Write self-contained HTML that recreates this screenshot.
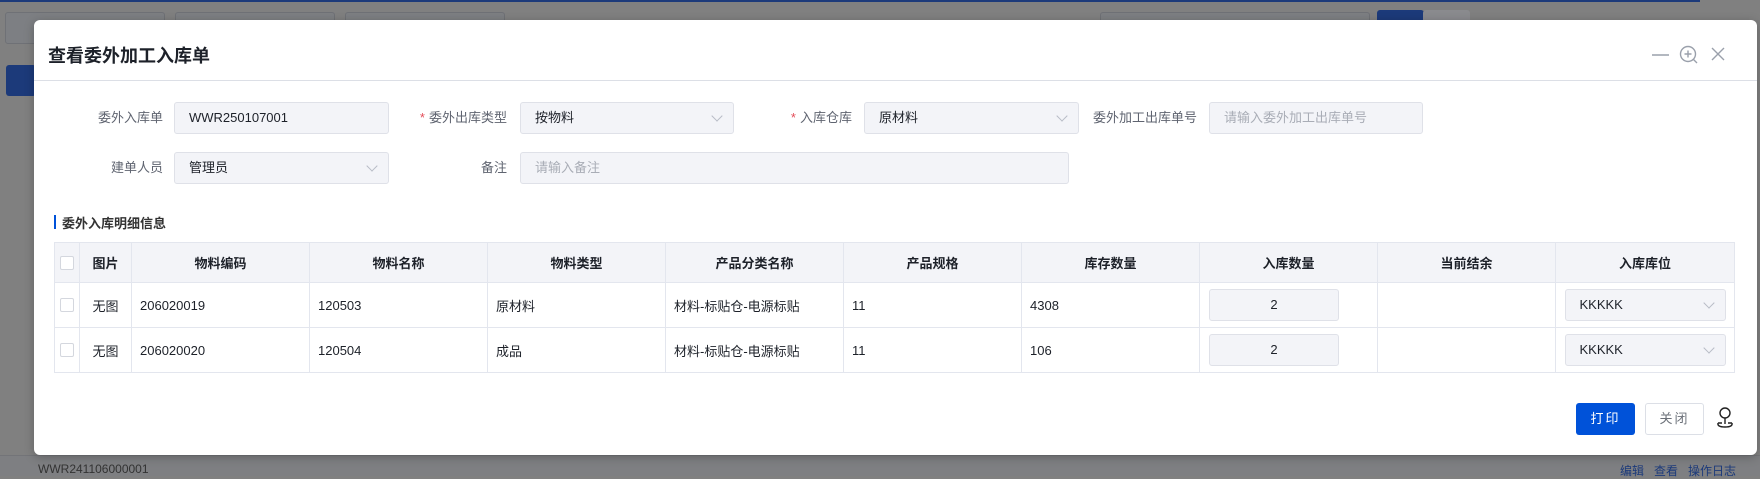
<!DOCTYPE html>
<html><head><meta charset="utf-8"><style>
*{box-sizing:border-box;margin:0;padding:0}
body{width:1760px;height:476px;overflow:hidden;position:relative;background:#808080;font-family:"Liberation Sans","Noto Sans CJK SC",sans-serif;font-size:13px;color:#1d2129}
.a{position:absolute}
.bg{background:#7d7f83;border:1px solid #6f7176}
.modal{left:34px;top:20px;width:1723px;height:435px;background:#fff;border-radius:6px;box-shadow:0 2px 10px rgba(0,0,0,.25)}
.lbl{font-size:13px;color:#5f6470;text-align:right;width:140px;height:32px;line-height:32px}
.inp{height:32px;background:#f3f4f8;border:1px solid #dfe1e8;border-radius:3px;line-height:30px;padding-left:14px;font-size:13px;color:#1d2129}
.ph{color:#a9adb6}
.req{color:#e34d59;margin-right:4px}
.arr{position:absolute;right:12px;top:9px;width:8px;height:8px;border-right:1px solid #b8bcc6;border-bottom:1px solid #b8bcc6;transform:rotate(45deg)}
table{border-collapse:collapse;table-layout:fixed}
td,th{border:1px solid #e3e6ee;font-size:13px}
th{background:#f3f4f8;height:40px;font-weight:bold;color:#1d2129}
td{height:45px;padding-left:8px}
.cb{width:14px;height:14px;border:1px solid #d4d7de;border-radius:2px;background:#fff;margin:auto}
</style></head><body>
<div class="a" style="left:0;top:0;width:1700px;height:2px;background:#1c3a7a"></div>
<div class="a bg" style="left:5px;top:12px;width:160px;height:32px;border-radius:3px"></div>
<div class="a bg" style="left:175px;top:12px;width:160px;height:32px;border-radius:3px"></div>
<div class="a bg" style="left:345px;top:12px;width:160px;height:32px;border-radius:3px"></div>
<div class="a bg" style="left:1100px;top:12px;width:270px;height:32px;border-radius:3px"></div>
<div class="a" style="left:1377px;top:10px;width:47px;height:34px;background:#1c3a7a;border-radius:3px"></div>
<div class="a" style="left:1423px;top:10px;width:47px;height:34px;background:#8a8b8e;border-radius:3px"></div>
<div class="a" style="left:6px;top:65px;width:30px;height:31px;background:#1c3a7a;border-radius:3px"></div>
<div class="a" style="left:0;top:455px;width:1760px;height:21px;background:#7e7f82;border-top:1px solid #737478"></div>
<div class="a" style="left:38px;top:462px;font-size:12px;color:#333">WWR241106000001</div>
<div class="a" style="left:1620px;top:462px;font-size:12px;color:#1c3a7a">编辑 &nbsp; 查看 &nbsp; 操作日志</div>

<div class="a modal">
  <div class="a" style="left:14px;top:22px;font-size:18px;font-weight:bold;color:#1d2129">查看委外加工入库单</div>
  <div class="a" style="left:0;top:60px;width:1723px;height:1px;background:#dcdfe6"></div>
  <svg class="a" style="left:1616px;top:24px" width="100" height="22" viewBox="0 0 100 22">
    <path d="M2 11h17" stroke="#9aa0ab" stroke-width="1.4" fill="none"/>
    <circle cx="38" cy="10" r="7.5" stroke="#9aa0ab" stroke-width="1.4" fill="none"/>
    <path d="M38 6.5v7M34.5 10h7M43.5 15.5l3.5 3.5" stroke="#9aa0ab" stroke-width="1.4" fill="none"/>
    <path d="M62 4l12 12M74 4L62 16" stroke="#9aa0ab" stroke-width="1.4" fill="none"/>
  </svg>

  <div class="a lbl" style="left:-11px;top:82px">委外入库单</div>
  <div class="a inp" style="left:140px;top:82px;width:215px">WWR250107001</div>
  <div class="a lbl" style="left:333px;top:82px"><span class="req">*</span>委外出库类型</div>
  <div class="a inp" style="left:486px;top:82px;width:214px">按物料<span class="arr"></span></div>
  <div class="a lbl" style="left:678px;top:82px"><span class="req">*</span>入库仓库</div>
  <div class="a inp" style="left:830px;top:82px;width:215px">原材料<span class="arr"></span></div>
  <div class="a lbl" style="left:1023px;top:82px">委外加工出库单号</div>
  <div class="a inp ph" style="left:1175px;top:82px;width:214px">请输入委外加工出库单号</div>
  <div class="a lbl" style="left:-11px;top:132px">建单人员</div>
  <div class="a inp" style="left:140px;top:132px;width:215px">管理员<span class="arr"></span></div>
  <div class="a lbl" style="left:333px;top:132px">备注</div>
  <div class="a inp ph" style="left:486px;top:132px;width:549px">请输入备注</div>

  <div class="a" style="left:20px;top:195px;width:2px;height:14px;background:#0052d9"></div>
  <div class="a" style="left:28px;top:193px;font-size:13px;font-weight:bold;color:#333">委外入库明细信息</div>

  <table class="a" style="left:20px;top:222px;width:1680px">
    <colgroup><col style="width:25px"><col style="width:52px"><col style="width:178px"><col style="width:178px"><col style="width:178px"><col style="width:178px"><col style="width:178px"><col style="width:178px"><col style="width:178px"><col style="width:178px"><col style="width:179px"></colgroup>
    <tr><th><div class="cb"></div></th><th>图片</th><th>物料编码</th><th>物料名称</th><th>物料类型</th><th>产品分类名称</th><th>产品规格</th><th>库存数量</th><th>入库数量</th><th>当前结余</th><th>入库库位</th></tr>
    <tr><td style="padding:0"><div class="cb"></div></td><td style="padding:0;text-align:center">无图</td><td>206020019</td><td>120503</td><td>原材料</td><td>材料-标贴仓-电源标贴</td><td>11</td><td>4308</td><td style="padding:0"><div class="inp" style="margin-left:9px;width:130px;text-align:center;padding:0">2</div></td><td></td><td style="padding:0"><div class="inp" style="position:relative;margin:0 auto;width:161px">KKKKK<span class="arr"></span></div></td></tr>
    <tr><td style="padding:0"><div class="cb"></div></td><td style="padding:0;text-align:center">无图</td><td>206020020</td><td>120504</td><td>成品</td><td>材料-标贴仓-电源标贴</td><td>11</td><td>106</td><td style="padding:0"><div class="inp" style="margin-left:9px;width:130px;text-align:center;padding:0">2</div></td><td></td><td style="padding:0"><div class="inp" style="position:relative;margin:0 auto;width:161px">KKKKK<span class="arr"></span></div></td></tr>
  </table>

  <div class="a" style="left:1542px;top:383px;width:59px;height:32px;background:#0052d9;border-radius:3px;color:#fff;text-align:center;line-height:32px;font-size:13px;letter-spacing:2px">打印</div>
  <div class="a" style="left:1611px;top:383px;width:59px;height:32px;background:#fff;border:1px solid #dcdfe6;border-radius:3px;color:#6b7078;text-align:center;line-height:30px;font-size:13px;letter-spacing:2px">关闭</div>
  <svg class="a" style="left:1681px;top:385px" width="20" height="26" viewBox="0 0 20 26">
    <circle cx="10" cy="8" r="5" stroke="#222" stroke-width="1.4" fill="none"/>
    <path d="M10 13v6M3 18h4M13 18h4M3 18q-1 4 7 4q8 0 7-4" stroke="#222" stroke-width="1.4" fill="none"/>
  </svg>
</div>
</body></html>
